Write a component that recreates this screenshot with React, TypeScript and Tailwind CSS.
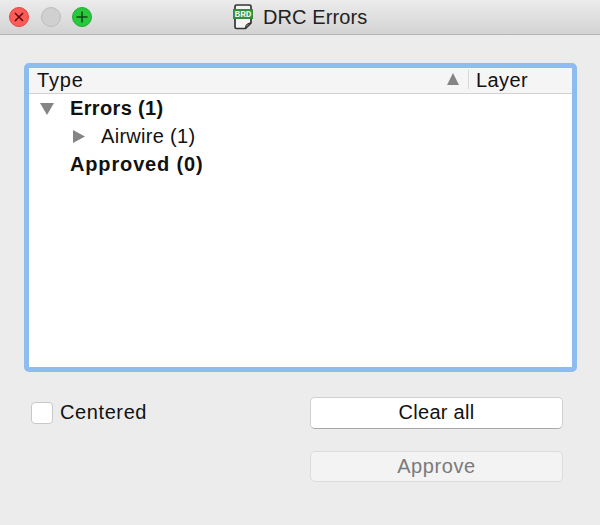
const Triangle = ({ dir, className }: { dir: 'down' | 'right' | 'up'; className: string }) => {
  const points = {
    down: '0,0 14,0 7,12',
    right: '0,0 12,6.500 0,13',
    up: '0,12 12,12 6,0',
  }[dir]
  return (
    <svg viewBox="0 0 14 14" className={className}>
      <polygon points={points} fill="#858585" />
    </svg>
  )
}

const TrafficLights = () => (
  <div className="flex items-center gap-[11.500px] pl-[9px]">
    <svg viewBox="0 0 20 20" className="w-5 h-5">
      <circle cx="10" cy="10" r="9.500" fill="#fc5b57" stroke="#e5443f" />
      <path d="M6 6l8 8M14 6l-8 8" stroke="#5a0d0b" strokeWidth="1.600" />
    </svg>
    <svg viewBox="0 0 20 20" className="w-5 h-5">
      <circle cx="10" cy="10" r="9.500" fill="#d0d0d0" stroke="#bcbcbc" />
    </svg>
    <svg viewBox="0 0 20 20" className="w-5 h-5">
      <circle cx="10" cy="10" r="9.500" fill="#2ac83f" stroke="#1eae30" />
      <path d="M10 4.500v11M4.500 10h11" stroke="#0a4a12" strokeWidth="1.500" />
    </svg>
  </div>
)

const BrdIcon = () => (
  <svg viewBox="0 0 20 26" className="w-5 h-[26px]">
    <path
      d="M3.500 1h13a1.500 1.500 0 0 1 1.500 1.500V19l-5.500 5.500H3.500a1.500 1.500 0 0 1-1.500-1.500V2.500A1.500 1.500 0 0 1 3.500 1z"
      fill="#f4f4f4"
      stroke="#333"
      strokeWidth="1.700"
    />
    <path d="M12.500 24.500c0-3.500 1-5 5.500-5.500" fill="none" stroke="#333" strokeWidth="1.300" />
    <rect x="0" y="5" width="20" height="10" fill="#2f8f3c" />
    <text x="10" y="13.300" textAnchor="middle" fontSize="9.500" fontWeight="700" fontFamily="Liberation Mono, monospace" fill="#eaf7ea">
      BRD
    </text>
  </svg>
)

export default function App() {
  return (
    <div className="w-[600px] h-[525px] bg-[#ececec] flex flex-col overflow-hidden font-['Liberation_Sans',sans-serif] text-[20px] text-[#111]">
      <div className="relative h-[35px] flex items-center border-b border-b-[#b4b4b4] bg-gradient-to-b from-[#ececec] to-[#d3d3d3]">
        <TrafficLights />
        <div className="absolute left-[233px] top-[4px] flex items-center gap-[10px]">
          <BrdIcon />
          <span className="text-[#222] leading-[26px] tracking-[0.1px]">DRC Errors</span>
        </div>
      </div>

      <div className="flex flex-col pt-[28px] pl-[24px] pr-[23px]">
        <div className="h-[309px] rounded-[5px] border-[5px] border-[#8fbcef] bg-white flex flex-col">
          <div className="h-[26px] flex items-center bg-[#f5f5f5] border-b border-b-[#d2d2d2] pl-[8px] pr-[44px] pb-[2px]">
            <span className="flex-1 leading-none tracking-[0.8px]">Type</span>
            <Triangle dir="up" className="w-[14px] h-[14px] mr-[7px]" />
            <span className="w-px h-[19px] bg-[#d8d8d8] mr-[7px]" />
            <span className="leading-none tracking-[0.4px]">Layer</span>
          </div>
          <div className="flex flex-col pl-[11px]">
            <div className="h-[29px] flex items-center font-bold pb-[2px]">
              <Triangle dir="down" className="w-[14px] h-[14px] mr-[16px] mt-[4px]" />
              <span className="tracking-[0.35px]">Errors (1)</span>
            </div>
            <div className="h-[28px] flex items-center pl-[33px] pb-[3px]">
              <Triangle dir="right" className="w-[14px] h-[14px] mr-[14px] mt-[2px]" />
              <span className="tracking-[0.3px]">Airwire (1)</span>
            </div>
            <div className="h-[28px] flex items-center pl-[30px] font-bold pb-[2px]">
              <span className="tracking-[0.85px]">Approved (0)</span>
            </div>
          </div>
        </div>

        <div className="flex justify-between pt-[25px] pl-[7px] pr-[14px]">
          <label className="flex items-center gap-[7px] h-[31px] self-start">
            <span className="w-[22px] h-[22px] rounded-[4px] bg-white border border-[#c8c8c8]" />
            <span className="tracking-[0.6px] relative bottom-px">Centered</span>
          </label>
          <div className="flex flex-col gap-[22px]">
            <button className="w-[253px] h-[32px] rounded-[5px] bg-white border border-[#d0d0d0] border-b-[#a8a8a8] leading-none tracking-[0.3px] pb-[2px]">
              Clear all
            </button>
            <button disabled className="w-[253px] h-[31px] rounded-[5px] bg-[#f3f3f3] border border-[#dcdcdc] text-[#7a7a7a] leading-none tracking-[0.6px] pb-[2px]">
              Approve
            </button>
          </div>
        </div>
      </div>
    </div>
  )
}
